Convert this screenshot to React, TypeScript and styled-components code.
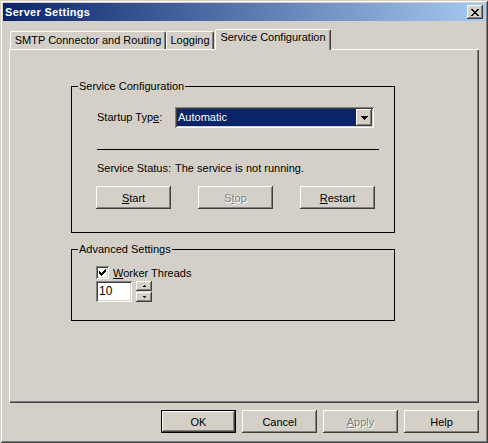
import React from "react";
import styled, { createGlobalStyle } from "styled-components";

const FACE = "#d4d0c8";

const Global = createGlobalStyle`
  html, body { margin: 0; padding: 0; background: ${FACE}; overflow: hidden; }
  body { font-family: "Liberation Sans", Arial, sans-serif; font-size: 11px; color: #000; }
  * { box-sizing: border-box; }
  #root { width: 488px; height: 443px; }
`;

const raised = `
  box-shadow: inset -1px -1px #404040, inset 1px 1px #ffffff, inset -2px -2px #808080, inset 2px 2px ${FACE};
`;
const sunken = `
  box-shadow: inset 1px 1px #808080, inset -1px -1px #ffffff, inset 2px 2px #404040, inset -2px -2px ${FACE};
`;

const Window = styled.div`
  width: 488px;
  height: 443px;
  padding: 3px;
  background: ${FACE};
  box-shadow: inset 1px 1px ${FACE}, inset -1px -1px #404040, inset 2px 2px #ffffff, inset -2px -2px #808080;
  display: flex;
  flex-direction: column;
`;

const TitleBar = styled.div`
  height: 18px;
  flex: none;
  display: flex;
  align-items: center;
  justify-content: space-between;
  padding: 0 2px 0 2px;
  background: linear-gradient(to right, #0a246a, #a6caf0);
  color: #fff;
  font-weight: bold;
  font-size: 11px;
`;

const TitleText = styled.span`
  line-height: 18px;
  letter-spacing: 0.3px;
`;

const CloseButton = styled.div`
  width: 16px;
  height: 14px;
  background: ${FACE};
  ${raised}
  display: flex;
  align-items: center;
  justify-content: center;
`;

const Body = styled.div`
  flex: 1;
  display: flex;
  flex-direction: column;
  padding: 8px 6px 0 6px;
`;

const TabRow = styled.div`
  height: 20px;
  flex: none;
  display: flex;
  align-items: flex-end;
  padding-left: 1px;
  position: relative;
  z-index: 1;
`;

const Tab = styled.div<{ $w: number; $active?: boolean }>`
  width: ${(p) => p.$w}px;
  height: ${(p) => (p.$active ? 21 : 18)}px;
  margin-bottom: ${(p) => (p.$active ? -1 : 0)}px;
  margin-left: ${(p) => (p.$active ? 1 : 0)}px;
  padding-top: ${(p) => (p.$active ? 1 : 2)}px;
  background: ${FACE};
  border-top: 1px solid #fff;
  border-left: 1px solid #fff;
  border-right: 1px solid #404040;
  border-radius: 2px 2px 0 0;
  box-shadow: inset -1px 0 #808080;
  text-align: center;
  line-height: 13px;
  white-space: nowrap;
`;

const Panel = styled.div`
  flex: 1;
  background: ${FACE};
  box-shadow: inset 1px 1px #ffffff, inset -1px -1px #404040, inset -2px -2px #808080;
  padding: 37px 0 0 62px;
  display: flex;
  flex-direction: column;
`;

const GroupBox = styled.div<{ $h: number; $mt?: number }>`
  width: 324px;
  height: ${(p) => p.$h}px;
  margin-top: ${(p) => p.$mt ?? 0}px;
  border: 1px solid #000;
  display: flex;
  flex-direction: column;
`;

const Legend = styled.div`
  align-self: flex-start;
  margin: -7px 0 0 6px;
  padding: 0 1px;
  height: 13px;
  line-height: 13px;
  background: ${FACE};
`;

const Row = styled.div<{ $mt: number }>`
  display: flex;
  align-items: center;
  margin: ${(p) => p.$mt}px 0 0 24px;
`;

const FieldLabel = styled.span`
  width: 78px;
  margin-left: 1px;
  line-height: 13px;
  white-space: nowrap;
`;

const Combo = styled.div`
  width: 199px;
  height: 21px;
  padding: 2px;
  background: #fff;
  ${sunken}
  display: flex;
`;

const ComboValue = styled.div`
  flex: 1;
  background: #0a246a;
  color: #fff;
  line-height: 17px;
  padding-left: 1px;
`;

const ArrowButton = styled.div<{ $h: number }>`
  width: 16px;
  height: ${(p) => p.$h}px;
  background: ${FACE};
  ${raised}
  display: flex;
  align-items: center;
  justify-content: center;
`;

const Separator = styled.div`
  width: 282px;
  height: 1px;
  margin: 21px 0 0 25px;
  background: #000;
`;

const StatusValue = styled.span`
  line-height: 13px;
`;

const ButtonRow = styled.div<{ $gap: number; $mt: number }>`
  display: flex;
  gap: ${(p) => p.$gap}px;
  margin: ${(p) => p.$mt}px 0 0 24px;
`;

const Button = styled.div<{ $disabled?: boolean; $default?: boolean }>`
  width: 75px;
  height: 23px;
  flex: none;
  background: ${FACE};
  display: flex;
  align-items: center;
  justify-content: center;
  color: ${(p) => (p.$disabled ? "#808080" : "#000")};
  text-shadow: ${(p) => (p.$disabled ? "1px 1px 0 #ffffff" : "none")};
  border: ${(p) => (p.$default ? "1px solid #000" : "none")};
  ${raised}
`;

const CheckRow = styled.div`
  display: flex;
  align-items: center;
  gap: 4px;
  margin: 10px 0 0 24px;
  height: 13px;
`;

const CheckBox = styled.div`
  width: 13px;
  height: 13px;
  background: #fff;
  ${sunken}
  display: flex;
  align-items: center;
  justify-content: center;
`;

const SpinRow = styled.div`
  display: flex;
  gap: 4px;
  margin: 2px 0 0 24px;
`;

const NumberField = styled.div`
  width: 36px;
  height: 21px;
  background: #fff;
  ${sunken}
  padding: 0 3px;
  line-height: 21px;
  font-size: 12px;
`;

const SpinColumn = styled.div`
  display: flex;
  flex-direction: column;
  gap: 1px;
`;

const Footer = styled.div`
  height: 37px;
  flex: none;
  display: flex;
  justify-content: flex-end;
  gap: 6px;
  padding: 7px 0 7px 0;
`;

const CloseGlyph = () => (
  <svg width="8" height="7" viewBox="0 0 8 7" shapeRendering="crispEdges">
    <path
      d="M0 0h2v1H0zM6 0h2v1H6zM1 1h2v1H1zM5 1h2v1H5zM2 2h4v1H2zM3 3h2v1H3zM2 4h4v1H2zM1 5h2v1H1zM5 5h2v1H5zM0 6h2v1H0zM6 6h2v1H6z"
      fill="#000"
    />
  </svg>
);

const DownArrow = ({ w }: { w: number }) => {
  const rows = Math.ceil(w / 2);
  let d = "";
  for (let i = 0; i < rows; i++) d += `M${i} ${i}h${w - 2 * i}v1H${i}z`;
  return (
    <svg width={w} height={rows} viewBox={`0 0 ${w} ${rows}`} shapeRendering="crispEdges">
      <path d={d} fill="#000" />
    </svg>
  );
};

const UpArrow = ({ w }: { w: number }) => {
  const rows = Math.ceil(w / 2);
  let d = "";
  for (let i = 0; i < rows; i++) d += `M${i} ${rows - 1 - i}h${w - 2 * i}v1H${i}z`;
  return (
    <svg width={w} height={rows} viewBox={`0 0 ${w} ${rows}`} shapeRendering="crispEdges">
      <path d={d} fill="#000" />
    </svg>
  );
};

const CheckMark = () => (
  <svg width="7" height="7" viewBox="0 0 7 7" shapeRendering="crispEdges">
    <path
      d="M6 0h1v1H6zM5 1h2v1H5zM0 2h1v1H0zM4 2h3v1H4zM0 3h2v1H0zM3 3h3v1H3zM0 4h5v1H0zM1 5h3v1H1zM2 6h1v1H2z"
      fill="#000"
    />
  </svg>
);

export default function App() {
  return (
    <>
      <Global />
      <Window>
        <TitleBar>
          <TitleText>Server Settings</TitleText>
          <CloseButton>
            <CloseGlyph />
          </CloseButton>
        </TitleBar>
        <Body>
          <TabRow>
            <Tab $w={156}>SMTP Connector and Routing</Tab>
            <Tab $w={48}>Logging</Tab>
            <Tab $w={116} $active>
              Service Configuration
            </Tab>
          </TabRow>
          <Panel>
            <GroupBox $h={147}>
              <Legend>Service Configuration</Legend>
              <Row $mt={14}>
                <FieldLabel>
                  Startup Typ<u>e</u>:
                </FieldLabel>
                <Combo>
                  <ComboValue>Automatic</ComboValue>
                  <ArrowButton $h={17}>
                    <DownArrow w={7} />
                  </ArrowButton>
                </Combo>
              </Row>
              <Separator />
              <Row $mt={12}>
                <FieldLabel>Service Status:</FieldLabel>
                <StatusValue>The service is not running.</StatusValue>
              </Row>
              <ButtonRow $gap={27} $mt={11}>
                <Button>
                  <span>
                    <u>S</u>tart
                  </span>
                </Button>
                <Button $disabled>
                  <span>
                    S<u>t</u>op
                  </span>
                </Button>
                <Button>
                  <span>
                    <u>R</u>estart
                  </span>
                </Button>
              </ButtonRow>
            </GroupBox>
            <GroupBox $h={72} $mt={16}>
              <Legend>Advanced Settings</Legend>
              <CheckRow>
                <CheckBox>
                  <CheckMark />
                </CheckBox>
                <span>
                  <u>W</u>orker Threads
                </span>
              </CheckRow>
              <SpinRow>
                <NumberField>10</NumberField>
                <SpinColumn>
                  <ArrowButton $h={10}>
                    <UpArrow w={3} />
                  </ArrowButton>
                  <ArrowButton $h={10}>
                    <DownArrow w={3} />
                  </ArrowButton>
                </SpinColumn>
              </SpinRow>
            </GroupBox>
          </Panel>
          <Footer>
            <Button $default>OK</Button>
            <Button>Cancel</Button>
            <Button $disabled>
              <span>
                <u>A</u>pply
              </span>
            </Button>
            <Button>Help</Button>
          </Footer>
        </Body>
      </Window>
    </>
  );
}
